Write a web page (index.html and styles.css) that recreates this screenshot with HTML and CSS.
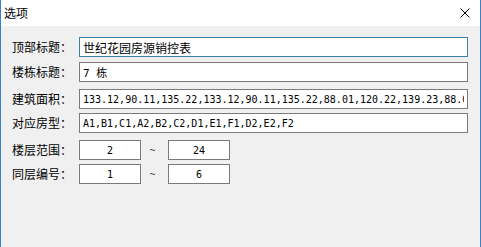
FILE: index.html
```html
<!DOCTYPE html>
<html lang="zh-CN">

<head>
        <meta charset="UTF-8">
        <meta name="viewport" content="width=device-width, initial-scale=1.0">
        <title>选项</title>
        <link rel="stylesheet" href="styles.css">
</head>

<body>
        <div class="window">
                <div class="titlebar">
                        <span class="title">选项</span>
                        <button class="close_btn" aria-label="关闭">
                                <svg width="10" height="10" viewBox="0 0 10 10">
                                        <path d="M0.5 0.5 L9.5 9.5 M9.5 0.5 L0.5 9.5" stroke="#000" stroke-width="1" fill="none" />
                                </svg>
                        </button>
                </div>

                <div class="form">
                        <div class="row">
                                <label class="label">顶部标题：</label>
                                <input class="field field_wide focused" type="text" value="世纪花园房源销控表">
                        </div>
                        <div class="row gap_1">
                                <label class="label">楼栋标题：</label>
                                <input class="field field_wide mixed" type="text" value="7 栋">
                        </div>
                        <div class="row gap_3">
                                <label class="label">建筑面积：</label>
                                <input class="field field_wide latin" type="text"
                                        value="133.12,90.11,135.22,133.12,90.11,135.22,88.01,120.22,139.23,88.01,120.22,139.23">
                        </div>
                        <div class="row">
                                <label class="label">对应房型：</label>
                                <input class="field field_wide latin" type="text" value="A1,B1,C1,A2,B2,C2,D1,E1,F1,D2,E2,F2">
                        </div>
                        <div class="row gap_3">
                                <label class="label">楼层范围：</label>
                                <input class="field field_small latin" type="text" value="2">
                                <span class="tilde">~</span>
                                <input class="field field_small latin" type="text" value="24">
                        </div>
                        <div class="row">
                                <label class="label">同层编号：</label>
                                <input class="field field_small latin" type="text" value="1">
                                <span class="tilde">~</span>
                                <input class="field field_small latin" type="text" value="6">
                        </div>
                </div>
        </div>
</body>

</html>
```

FILE: styles.css
```css
html,
body {
        margin: 0;
        padding: 0;
        background-color: #f0f0f0;
}

.window {
        width: 481px;
        height: 247px;
        box-sizing: border-box;
        border-left: 1px solid #3a82c4;
        border-right: 1px solid #3a82c4;
        background-color: #f0f0f0;
        font-family: "Noto Sans CJK SC", sans-serif;
        font-size: 12px;
        color: #000;
        overflow: hidden;
}

.titlebar {
        height: 26px;
        background-color: #fff;
        display: flex;
        align-items: center;
        justify-content: space-between;
        padding-left: 3px;
}

.title {
        font-size: 12px;
        line-height: 14px;
}

.close_btn {
        width: 30px;
        height: 26px;
        border: none;
        background: transparent;
        padding: 0;
        display: flex;
        align-items: center;
        justify-content: center;
        margin-top: -1px;
}

.form {
        display: flex;
        flex-direction: column;
        gap: 4px;
        padding: 11px 0 0 11px;
}

.gap_1 {
        margin-top: 1px;
}

.gap_3 {
        margin-top: 3px;
}

.row {
        display: flex;
        align-items: center;
        height: 20px;
}

.label {
        width: 67px;
        flex: none;
        line-height: 14px;
}

.field {
        height: 20px;
        box-sizing: border-box;
        border: 1px solid #7a7a7a;
        background-color: #fff;
        padding: 0 3px;
        margin: 0;
        font-family: "Noto Sans CJK SC", sans-serif;
        font-size: 12px;
        color: #000;
        outline: none;
}

.field_wide {
        width: 389px;
}

.focused {
        border-color: #3c7fa8;
}

.latin {
        font-family: "DejaVu Sans Mono", "Noto Sans CJK SC", monospace;
        font-size: 10px;
}

.mixed {
        font-family: "DejaVu Sans Mono", "Noto Sans CJK SC", monospace;
        font-size: 11px;
}

.field_small {
        width: 62px;
        text-align: center;
}

.tilde {
        width: 27px;
        text-align: center;
        font-size: 11px;
        color: #333;
        margin-left: -2px;
        margin-right: 2px;
        margin-top: -3px;
}
```
